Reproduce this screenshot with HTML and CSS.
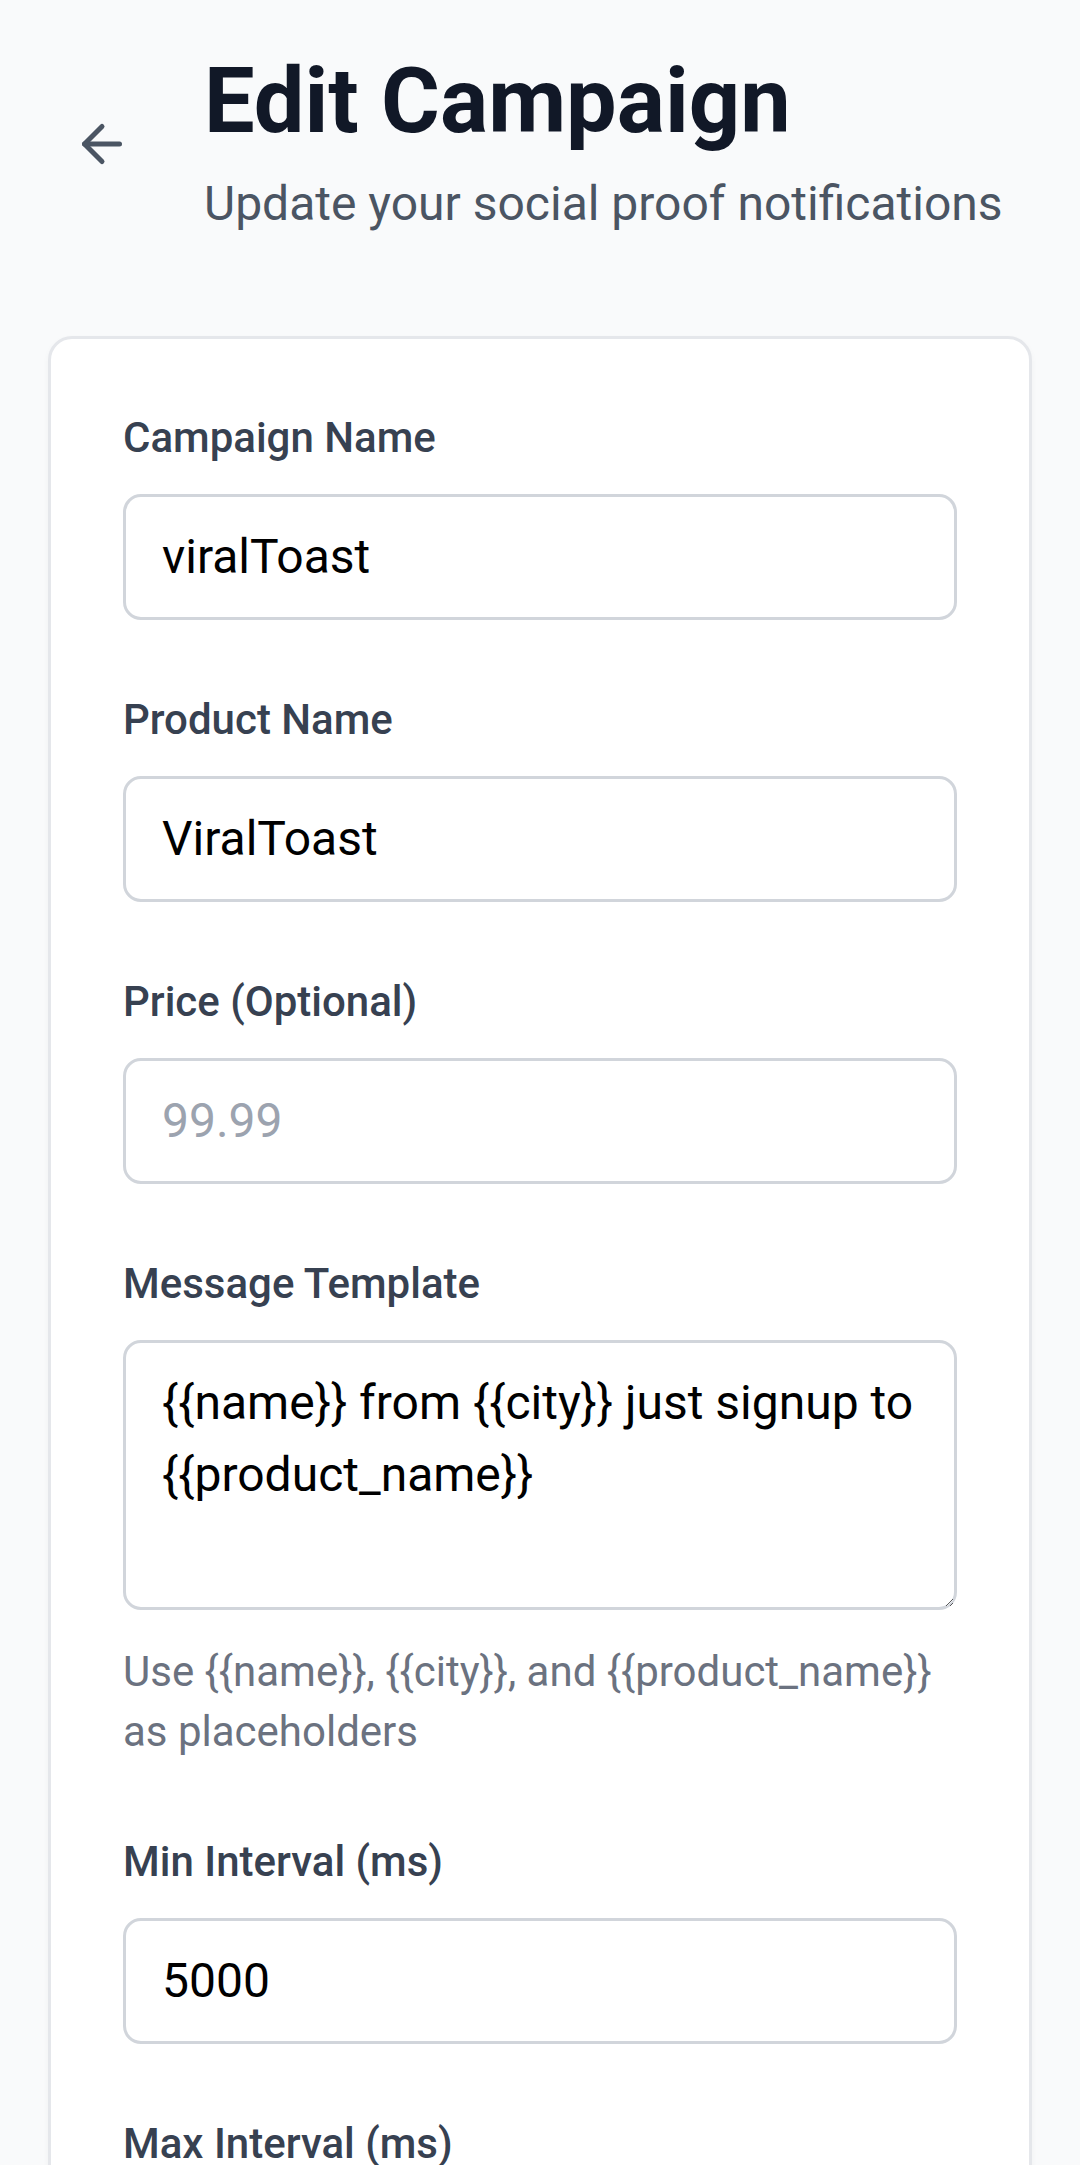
FILE: index.html
```html
<!DOCTYPE html>
<html lang="en">
<head>
    <meta charset="UTF-8">
    <meta name="viewport" content="width=device-width, initial-scale=1.0">
    <title>Edit Campaign</title>
    <link rel="stylesheet" href="styles.css">
</head>
<body>
    <div class="page">
        <div class="header">
            <button class="back-btn" type="button" aria-label="Back">
                <svg class="back-icon" viewBox="0 0 24 24" fill="none" stroke="currentColor" stroke-width="2" stroke-linecap="round" stroke-linejoin="round">
                    <path d="m12 19-7-7 7-7"/>
                    <path d="M19 12H5"/>
                </svg>
            </button>
            <div>
                <h1 class="title">Edit Campaign</h1>
                <p class="subtitle">Update your social proof notifications</p>
            </div>
        </div>

        <form class="card">
            <div class="field">
                <label class="label" for="campaignName">Campaign Name</label>
                <input class="input" type="text" id="campaignName" value="viralToast">
            </div>

            <div class="field">
                <label class="label" for="productName">Product Name</label>
                <input class="input" type="text" id="productName" value="ViralToast">
            </div>

            <div class="field">
                <label class="label" for="price">Price (Optional)</label>
                <input class="input" type="text" id="price" placeholder="99.99">
            </div>

            <div class="field">
                <label class="label" for="template">Message Template</label>
                <textarea class="input textarea" id="template" rows="3">{{name}} from {{city}} just signup to {{product_name}}</textarea>
                <p class="help">Use {{name}}, {{city}}, and {{product_name}} as placeholders</p>
            </div>

            <div class="field">
                <label class="label" for="minInterval">Min Interval (ms)</label>
                <input class="input" type="text" id="minInterval" value="5000">
            </div>

            <div class="field">
                <label class="label" for="maxInterval">Max Interval (ms)</label>
                <input class="input" type="text" id="maxInterval" value="15000">
            </div>
        </form>
    </div>
    <div class="nav-strip"></div>
</body>
</html>
```

FILE: styles.css
```css
* {
    box-sizing: border-box;
}

body {
    margin: 0;
    font-family: Roboto, "Noto Sans", sans-serif;
    background-color: #f9fafb;
    color: #111827;
}

.page {
    padding: 48px;
}

.header {
    display: flex;
    align-items: center;
    margin-bottom: 96px;
}

.back-btn {
    display: flex;
    padding: 24px;
    margin-right: 48px;
    border: none;
    background: none;
    color: #4b5563;
    cursor: pointer;
}

.back-icon {
    width: 60px;
    height: 60px;
}

.title {
    margin: 0;
    font-size: 90px;
    line-height: 108px;
    font-weight: 700;
    color: #111827;
}

.subtitle {
    margin: 12px 0 0;
    font-size: 48px;
    line-height: 72px;
    color: #4b5563;
}

.card {
    background-color: #fff;
    border: 3px solid #e5e7eb;
    border-radius: 24px;
    box-shadow: 0 3px 6px rgba(0, 0, 0, 0.04);
    padding: 69px 72px 72px;
    min-height: 2000px;
}

.field + .field {
    margin-top: 70px;
}

.label {
    display: block;
    margin-bottom: 26px;
    font-size: 42px;
    line-height: 60px;
    font-weight: 500;
    color: #374151;
}

.input {
    display: block;
    width: 100%;
    padding: 24px 36px;
    font-family: Roboto, "Noto Sans", sans-serif;
    font-size: 48px;
    line-height: 72px;
    color: #000;
    background: #fff;
    border: 3px solid #d1d5db;
    border-radius: 18px;
    outline: none;
}

.input::placeholder {
    color: #9ca3af;
}

.textarea {
    resize: vertical;
}

.help {
    margin: 32px 0 0;
    font-size: 42px;
    line-height: 60px;
    color: #6b7280;
}

.nav-strip {
    position: fixed;
    left: 0;
    right: 0;
    bottom: 0;
    height: 15px;
    background: #fff;
}
```
